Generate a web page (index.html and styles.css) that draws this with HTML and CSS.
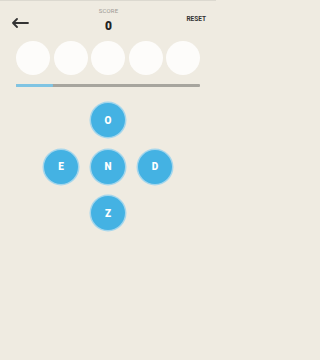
FILE: index.html
```html
<!DOCTYPE html>
<html>
<head>
<meta charset="utf-8">
<link rel="stylesheet" href="styles.css">
</head>
<body>
<div class="app">
  <header class="top">
    <div class="back">
      <svg width="18" height="10" viewBox="0 0 18 10"><path d="M17 5H2M6 1L2 5l4 4" fill="none" stroke="#333" stroke-width="1.8" stroke-linecap="round" stroke-linejoin="round"/></svg>
    </div>
    <div class="score">
      <div class="score-label">SCORE</div>
      <div class="score-value">0</div>
    </div>
    <div class="reset">RESET</div>
  </header>
  <div class="slots">
    <div class="slot"></div><div class="slot"></div><div class="slot"></div><div class="slot"></div><div class="slot"></div>
  </div>
  <div class="progress"><div class="progress-fill" style="width:20%"></div></div>
  <div class="letters">
    <div class="cell"></div><div class="tile">O</div><div class="cell"></div>
    <div class="tile">E</div><div class="tile">N</div><div class="tile">D</div>
    <div class="cell"></div><div class="tile">Z</div><div class="cell"></div>
  </div>
</div>
</body>
</html>
```
FILE: styles.css
```css
html, body {
  margin: 0;
  padding: 0;
  background: #efebe1;
}
body {
  width: 216px;
  height: 360px;
  overflow: hidden;
  font-family: Roboto, "Liberation Sans", sans-serif;
}
.app {
  border-top: 1px solid #dcd9d0;
}
.top {
  display: flex;
  justify-content: space-between;
  align-items: flex-start;
  height: 38px;
  padding: 0 10px 0 11px;
}
.back {
  margin-top: 12px;
  width: 30px;
}
.score {
  display: flex;
  flex-direction: column;
  align-items: center;
  margin-top: 6px;
}
.score-label {
  font-size: 6px;
  color: #9c9a94;
  letter-spacing: 0.2px;
  line-height: 8px;
}
.score-value {
  font-size: 12px;
  font-weight: 900;
  color: #222;
  line-height: 12px;
  margin-top: 5px;
}
.reset {
  width: 30px;
  text-align: right;
  margin-top: 14px;
  font-size: 6.5px;
  font-weight: 700;
  color: #333;
  line-height: 8px;
}
.slots {
  display: flex;
  gap: 3.5px;
  padding: 2px 16px 0 16px;
}
.slot {
  width: 34px;
  height: 34px;
  border-radius: 50%;
  background: #fdfcfa;
}
.progress {
  margin: 9px 16px 0 16px;
  height: 3px;
  background: #a7a59e;
  border-radius: 1px;
}
.progress-fill {
  height: 100%;
  background: #7fc4e3;
  border-radius: 1px;
}
.letters {
  display: grid;
  grid-template-columns: repeat(3, 34px);
  grid-auto-rows: 34px;
  column-gap: 13px;
  row-gap: 12.5px;
  justify-content: center;
  margin-top: 16px;
}
.tile {
  border-radius: 50%;
  background: #44b2e3;
  box-shadow: 0 0 0 1.5px #a5d6ec;
  color: #fff;
  font-weight: 900;
  font-size: 10px;
  display: flex;
  align-items: center;
  justify-content: center;
}
```
